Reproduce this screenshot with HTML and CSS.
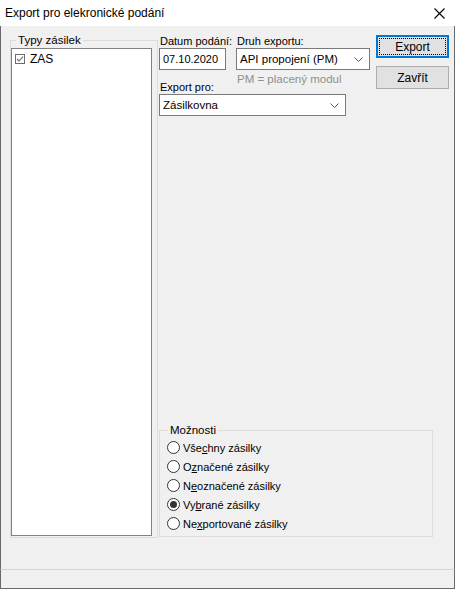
FILE: index.html
```html
<!DOCTYPE html>
<html lang="cs">
<head>
<meta charset="utf-8">
<title>Export pro elekronické podání</title>
<link rel="stylesheet" href="styles.css">
</head>
<body>
<div class="window">
  <div class="titlebar">
    <span class="title">Export pro elekronické podání</span>
    <svg class="close" width="11" height="11" viewBox="0 0 11 11"><path d="M0.5 0.5 L10.5 10.5 M10.5 0.5 L0.5 10.5" stroke="#000" stroke-width="1.1" fill="none"/></svg>
  </div>
  <div class="content">
    <div class="main">
      <fieldset class="group types">
        <legend>Typy zásilek</legend>
        <div class="listbox">
          <div class="item">
            <svg class="check" width="10" height="10" viewBox="0 0 10 10"><rect x="0.5" y="0.5" width="9" height="9" fill="#fff" stroke="#6d6d6d"/><path d="M2 5 L4 7 L8 2.6" stroke="#6d6d6d" stroke-width="1.1" fill="none"/></svg>
            <span>ZAS</span>
          </div>
        </div>
      </fieldset>
      <div class="right">
        <div class="top">
          <div class="form">
            <label class="lbl">Datum podání:</label>
            <label class="lbl">Druh exportu:</label>
            <div class="input date">07.10.2020</div>
            <div class="input combo">
              <span>API propojení (PM)</span>
              <svg class="chev" width="9" height="5" viewBox="0 0 9 5"><path d="M0.5 0.5 L4.5 4.5 L8.5 0.5" stroke="#555" fill="none"/></svg>
            </div>
            <label class="lbl export-lbl">Export pro:</label>
            <div class="note">PM = placený modul</div>
            <div class="input combo wide">
              <span>Zásilkovna</span>
              <svg class="chev" width="9" height="5" viewBox="0 0 9 5"><path d="M0.5 0.5 L4.5 4.5 L8.5 0.5" stroke="#555" fill="none"/></svg>
            </div>
          </div>
          <div class="buttons">
            <button class="btn default">Export</button>
            <button class="btn">Zavřít</button>
          </div>
        </div>
        <fieldset class="group options">
          <legend>Možnosti</legend>
          <div class="radio"><span class="dot"></span><span>Vše<u>c</u>hny zásilky</span></div>
          <div class="radio"><span class="dot"></span><span>O<u>z</u>načené zásilky</span></div>
          <div class="radio"><span class="dot"></span><span>N<u>e</u>označené zásilky</span></div>
          <div class="radio"><span class="dot on"></span><span>Vy<u>b</u>rané zásilky</span></div>
          <div class="radio"><span class="dot"></span><span>Ne<u>x</u>portované zásilky</span></div>
        </fieldset>
      </div>
    </div>
  </div>
  <div class="footer"></div>
</div>
</body>
</html>
```

FILE: styles.css
```css
* { box-sizing: border-box; }
html, body { margin: 0; padding: 0; }
body {
  width: 455px;
  height: 589px;
  overflow: hidden;
  background: #f0f0f0;
  font-family: "Liberation Sans", Arial, sans-serif;
  font-size: 11px;
  color: #000;
}
.window {
  width: 455px;
  height: 589px;
  display: flex;
  flex-direction: column;
}
.titlebar {
  height: 26px;
  flex: none;
  background: #fff;
  display: flex;
  align-items: center;
  justify-content: space-between;
  padding: 0 10px 0 5px;
  font-size: 12px;
}
.title { line-height: 14px; }
.close { display: block; }
.content {
  flex: 1;
  display: flex;
  flex-direction: column;
  background: #f0f0f0;
  border-left: 1px solid #6a6a6a;
  border-right: 1px solid #6a6a6a;
  padding: 8px 0 31px 9px;
}
.main {
  flex: 1;
  display: flex;
}
.group {
  margin: 0;
  border: 1px solid #dcdcdc;
  min-width: 0;
}
.group legend {
  font-size: 11.5px;
  line-height: 13px;
  padding: 0 2px;
}
.types {
  width: 148px;
  margin-right: 1px;
  padding: 1px 5px 1px 0;
  display: flex;
  flex-direction: column;
}
.types legend { margin-left: 5px; }
.listbox {
  flex: 1;
  background: #fff;
  border: 1px solid #828282;
  padding: 1px 0 0 3px;
}
.item {
  display: flex;
  align-items: center;
  gap: 5px;
  height: 15px;
  padding-top: 2px;
  font-size: 12px;
}
.check { display: block; flex: none; }
.right {
  width: 274px;
  display: flex;
  flex-direction: column;
  justify-content: space-between;
}
.top {
  display: flex;
}
.form {
  width: 211px;
  display: grid;
  grid-template-columns: 67px 134px;
  column-gap: 10px;
  align-content: start;
}
.lbl {
  display: block;
  line-height: 14px;
  height: 14px;
  padding-left: 1px;
  white-space: nowrap;
  font-size: 11px;
}
.input {
  height: 22px;
  background: #fff;
  border: 1px solid #7a7a7a;
  padding: 0 3px;
  display: flex;
  align-items: center;
  font-size: 11.5px;
  white-space: nowrap;
  overflow: hidden;
}
.date { font-size: 11px; }
.combo { justify-content: space-between; padding-right: 6px; }
.chev { display: block; flex: none; }
.export-lbl { margin-top: 10px; }
.note {
  margin-top: 2px;
  color: #8f8f8f;
  line-height: 14px;
  padding-left: 1px;
  white-space: nowrap;
  font-size: 11.5px;
}
.wide {
  grid-column: 1 / span 2;
  width: 187px;
}
.buttons {
  margin-left: 6px;
  margin-top: 1px;
  display: flex;
  flex-direction: column;
  gap: 8px;
}
.btn {
  width: 73px;
  height: 23px;
  background: #e1e1e1;
  border: 1px solid #adadad;
  font-family: inherit;
  font-size: 12px;
  color: #000;
  padding: 0;
  margin: 0;
}
.btn.default {
  border: 2px solid #0078d7;
  outline: 1px dotted #000;
  outline-offset: -4px;
}
.options {
  margin-bottom: 1px;
  padding: 1px 6px 3px 7px;
}
.options legend { margin-left: 1px; }
.radio {
  height: 19px;
  display: flex;
  align-items: center;
  gap: 3px;
  white-space: nowrap;
  font-size: 11px;
}
.radio u { text-decoration: underline; }
.dot {
  width: 13px;
  height: 13px;
  border: 1px solid #333;
  border-radius: 50%;
  background: #fff;
  flex: none;
  display: flex;
  align-items: center;
  justify-content: center;
}
.dot.on::after {
  content: "";
  width: 7px;
  height: 7px;
  border-radius: 50%;
  background: #333;
}
.footer {
  height: 20px;
  flex: none;
  background: #f0f0f0;
  border-top: 1px solid #d4d4d4;
  border-left: 1px solid #6a6a6a;
  border-right: 1px solid #6a6a6a;
  border-bottom: 1px solid #6a6a6a;
}
```
